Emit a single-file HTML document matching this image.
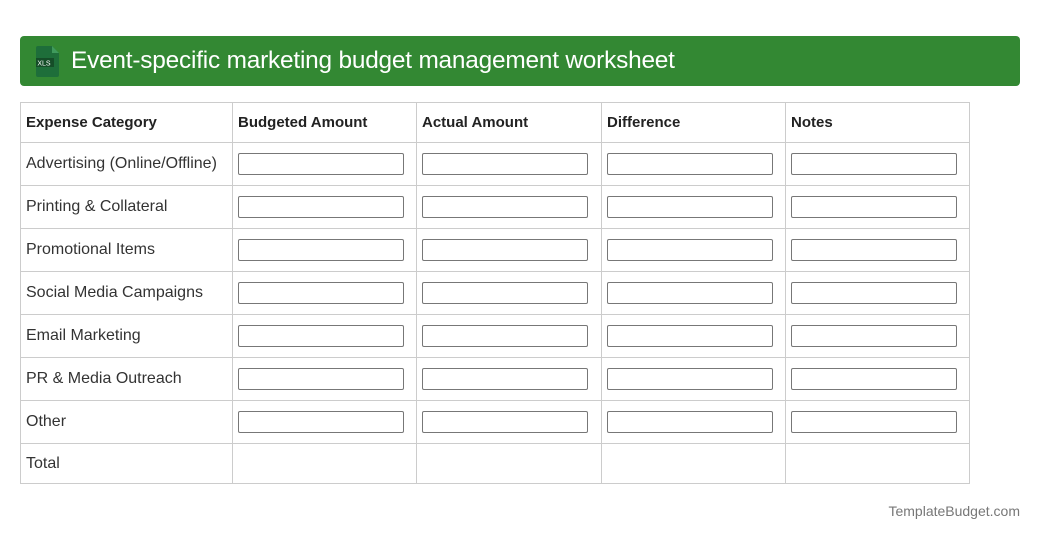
<!DOCTYPE html>
<html><head><meta charset="utf-8"><style>
*{box-sizing:border-box;margin:0;padding:0}
body{width:1040px;height:541px;background:#fff;font-family:"Liberation Sans",sans-serif;color:#333;position:relative;overflow:hidden}
.bar{position:absolute;left:20px;top:36px;width:1000px;height:50px;background:#338833;border-radius:4px}
.bar h1{position:absolute;left:51px;top:11px;font-size:24.4px;font-weight:normal;color:#fff;letter-spacing:-0.2px}
.icon{position:absolute;left:16px;top:10px}
table{position:absolute;left:20px;top:102px;border-collapse:collapse}
td,th{border:1px solid #ccc;font-size:16px;text-align:left;padding:0 5px;vertical-align:middle}
th{height:40px;font-weight:bold;color:#222;font-size:15px}
td{height:43px}
tr.tot td{height:40px}
.in{width:166px;height:22px;border:1px solid #777;border-radius:2px}
.foot{position:absolute;right:20px;top:503px;font-size:14px;color:#777}
</style></head><body>
<div class="bar">
<svg class="icon" width="24" height="31" viewBox="0 0 24 31"><path d="M2 0h14l7 7v22a2 2 0 0 1-2 2H2a2 2 0 0 1-2-2V2a2 2 0 0 1 2-2z" fill="#1e6e3a"/><path d="M16 0v7h7z" fill="#3f9a5c"/><rect x="-2" y="12" width="20" height="9" fill="#154d28"/><text x="8" y="19.5" font-size="7" fill="#fff" text-anchor="middle" font-family="Liberation Sans">XLS</text></svg>
<h1>Event-specific marketing budget management worksheet</h1>
</div>
<table>
<tr><th style="width:212px">Expense Category</th><th style="width:184px">Budgeted Amount</th><th style="width:185px">Actual Amount</th><th style="width:184px">Difference</th><th style="width:184px">Notes</th></tr>
<tr><td>Advertising (Online/Offline)</td><td><div class="in"></div></td><td><div class="in"></div></td><td><div class="in"></div></td><td><div class="in"></div></td></tr>
<tr><td>Printing &amp; Collateral</td><td><div class="in"></div></td><td><div class="in"></div></td><td><div class="in"></div></td><td><div class="in"></div></td></tr>
<tr><td>Promotional Items</td><td><div class="in"></div></td><td><div class="in"></div></td><td><div class="in"></div></td><td><div class="in"></div></td></tr>
<tr><td>Social Media Campaigns</td><td><div class="in"></div></td><td><div class="in"></div></td><td><div class="in"></div></td><td><div class="in"></div></td></tr>
<tr><td>Email Marketing</td><td><div class="in"></div></td><td><div class="in"></div></td><td><div class="in"></div></td><td><div class="in"></div></td></tr>
<tr><td>PR &amp; Media Outreach</td><td><div class="in"></div></td><td><div class="in"></div></td><td><div class="in"></div></td><td><div class="in"></div></td></tr>
<tr><td>Other</td><td><div class="in"></div></td><td><div class="in"></div></td><td><div class="in"></div></td><td><div class="in"></div></td></tr>
<tr class="tot"><td>Total</td><td></td><td></td><td></td><td></td></tr>
</table>
<div class="foot">TemplateBudget.com</div>
</body></html>
